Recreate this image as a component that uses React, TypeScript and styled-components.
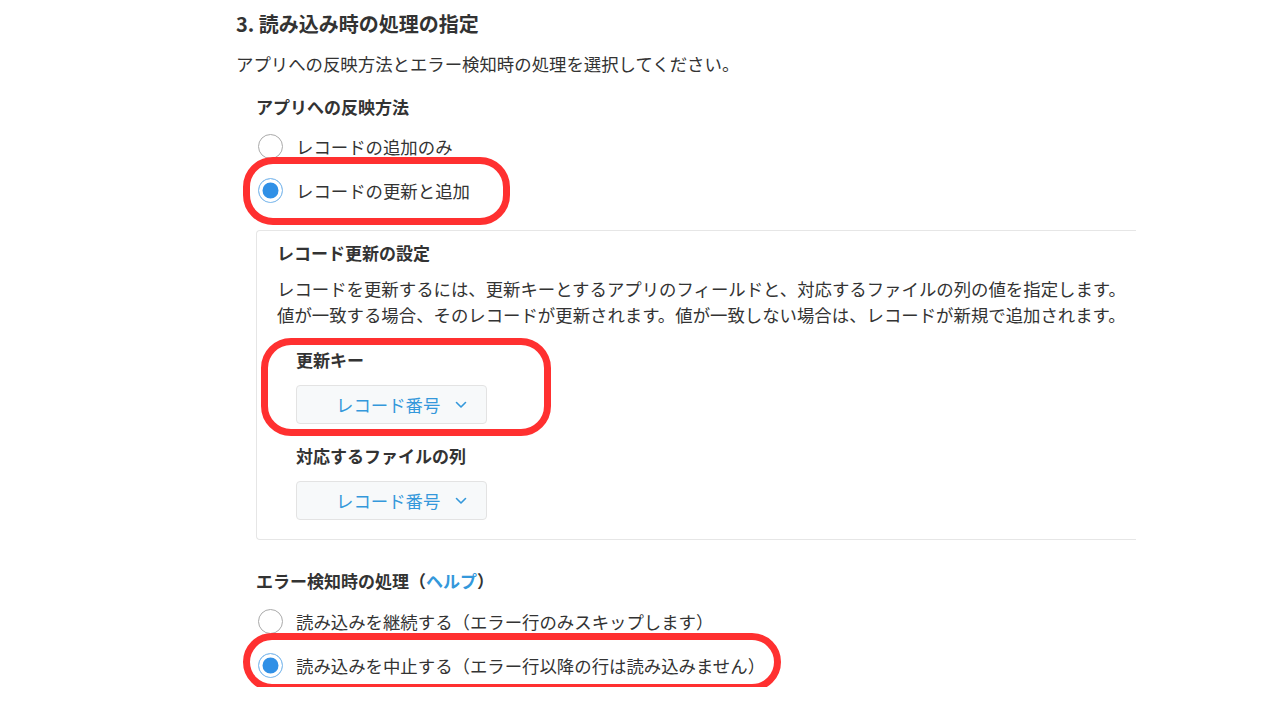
import styled, { createGlobalStyle } from "styled-components";

const GlobalStyle = createGlobalStyle`
  body {
    margin: 0;
    background: #fff;
    font-family: "Noto Sans CJK JP", "Noto Sans", sans-serif;
    color: #333;
  }
`;

const Page = styled.div`
  width: 900px;
  padding: 10px 0 0 236px;
`;

const Title = styled.h2`
  margin: 0;
  font-size: 20px;
  line-height: 28px;
  font-weight: 700;
`;

const Lead = styled.p`
  margin: 13px 0 0;
  font-size: 17.4px;
  line-height: 26px;
`;

const Section = styled.section<{ $gap: number }>`
  margin: ${(p) => p.$gap}px 0 0 20px;
`;

const Label = styled.div`
  font-size: 17px;
  line-height: 26px;
  font-weight: 700;
`;

const Link = styled.a`
  color: #3498db;
  text-decoration: none;
`;

const RadioGroup = styled.div<{ $gap: number }>`
  margin-top: ${(p) => p.$gap}px;
  display: flex;
  flex-direction: column;
`;

const RadioRow = styled.label`
  position: relative;
  display: flex;
  align-items: center;
  gap: 13px;
  height: 44px;
  font-size: 17.4px;
  padding-left: 2px;
`;

const RadioMark = styled.span<{ $checked?: boolean }>`
  box-sizing: border-box;
  width: 25px;
  height: 25px;
  border-radius: 50%;
  flex: none;
  border: 1.5px solid ${(p) => (p.$checked ? "#8fc2ee" : "#aaa")};
  background: ${(p) => (p.$checked ? "#3090e6" : "#fff")};
  box-shadow: ${(p) => (p.$checked ? "inset 0 0 0 3.5px #fff" : "none")};
`;

const Panel = styled.div`
  margin-top: 18px;
  width: 859px;
  border: 1px solid #e6e6e6;
  border-right: none;
  border-radius: 4px 0 0 4px;
  padding: 9px 0 19px 20px;
`;

const PanelText = styled.p`
  margin: 10px 0 0;
  font-size: 17.4px;
  line-height: 26px;
  white-space: nowrap;
`;

const Field = styled.div<{ $gap: number }>`
  position: relative;
  margin: ${(p) => p.$gap}px 0 0 19px;
  width: fit-content;
`;

const SelectButton = styled.button`
  box-sizing: border-box;
  margin-top: 12px;
  width: 191px;
  height: 39px;
  display: flex;
  align-items: center;
  gap: 15px;
  padding: 0 0 0 39px;
  background: #f7f9fa;
  border: 1px solid #e3e3e3;
  border-radius: 4px;
  color: #3498db;
  font-family: inherit;
  font-size: 17.4px;
`;

const Highlight = styled.span<{ $top: number; $left: number; $w: number; $h: number }>`
  position: absolute;
  box-sizing: border-box;
  top: ${(p) => p.$top}px;
  left: ${(p) => p.$left}px;
  width: ${(p) => p.$w}px;
  height: ${(p) => p.$h}px;
  border: 7px solid #ff3030;
  border-radius: 30px;
  pointer-events: none;
`;

function Chevron() {
  return (
    <svg width="12" height="8" viewBox="0 0 12 8">
      <path d="M1.5 1.5 L6 6 L10.5 1.5" fill="none" stroke="#3498db" strokeWidth="1.6" strokeLinecap="round" strokeLinejoin="round" />
    </svg>
  );
}

function Select({ value }: { value: string }) {
  return (
    <SelectButton>
      {value}
      <Chevron />
    </SelectButton>
  );
}

export default function App() {
  return (
    <Page>
      <GlobalStyle />
      <Title>3. 読み込み時の処理の指定</Title>
      <Lead>アプリへの反映方法とエラー検知時の処理を選択してください。</Lead>

      <Section $gap={17}>
        <Label>アプリへの反映方法</Label>
        <RadioGroup $gap={4}>
          <RadioRow>
            <RadioMark />
            レコードの追加のみ
          </RadioRow>
          <RadioRow>
            <RadioMark $checked />
            レコードの更新と追加
            <Highlight $top={-11} $left={-13} $w={267} $h={68} />
          </RadioRow>
        </RadioGroup>

        <Panel>
          <Label>レコード更新の設定</Label>
          <PanelText>
            レコードを更新するには、更新キーとするアプリのフィールドと、対応するファイルの列の値を指定します。
            <br />
            値が一致する場合、そのレコードが更新されます。値が一致しない場合は、レコードが新規で追加されます。
          </PanelText>
          <Field $gap={19}>
            <Label>更新キー</Label>
            <Select value="レコード番号" />
            <Highlight $top={-9} $left={-35} $w={290} $h={98} />
          </Field>
          <Field $gap={19}>
            <Label>対応するファイルの列</Label>
            <Select value="レコード番号" />
          </Field>
        </Panel>
      </Section>

      <Section $gap={28}>
        <Label>
          エラー検知時の処理（<Link href="#">ヘルプ</Link>）
        </Label>
        <RadioGroup $gap={5}>
          <RadioRow>
            <RadioMark />
            読み込みを継続する（エラー行のみスキップします）
          </RadioRow>
          <RadioRow>
            <RadioMark $checked />
            読み込みを中止する（エラー行以降の行は読み込みません）
            <Highlight $top={-10} $left={-13} $w={538} $h={58} />
          </RadioRow>
        </RadioGroup>
      </Section>
    </Page>
  );
}
